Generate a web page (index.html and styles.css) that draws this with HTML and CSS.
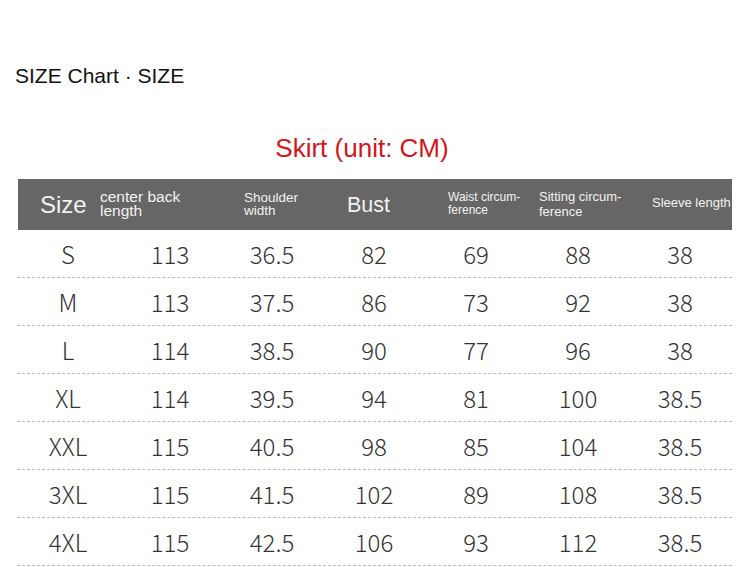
FILE: index.html
```html
<!DOCTYPE html>
<html>
<head>
<meta charset="utf-8">
<link rel="stylesheet" href="styles.css">
</head>
<body>
<div class="page">
  <h1 class="chart-title">SIZE Chart · SIZE</h1>
  <h2 class="sub-title">Skirt (unit: CM)</h2>
  <div class="table">
    <div class="head">
      <div class="hc hc-size">Size</div>
      <div class="hc hc-back">center back<br>length</div>
      <div class="hc hc-shoulder">Shoulder<br>width</div>
      <div class="hc hc-bust">Bust</div>
      <div class="hc hc-waist">Waist circum-<br>ference</div>
      <div class="hc hc-sit">Sitting circum-<br>ference</div>
      <div class="hc hc-sleeve">Sleeve length</div>
    </div>
    <div class="row"><span>S</span><span>113</span><span>36.5</span><span>82</span><span>69</span><span>88</span><span>38</span></div>
    <div class="row"><span>M</span><span>113</span><span>37.5</span><span>86</span><span>73</span><span>92</span><span>38</span></div>
    <div class="row"><span>L</span><span>114</span><span>38.5</span><span>90</span><span>77</span><span>96</span><span>38</span></div>
    <div class="row"><span>XL</span><span>114</span><span>39.5</span><span>94</span><span>81</span><span>100</span><span>38.5</span></div>
    <div class="row"><span>XXL</span><span>115</span><span>40.5</span><span>98</span><span>85</span><span>104</span><span>38.5</span></div>
    <div class="row"><span>3XL</span><span>115</span><span>41.5</span><span>102</span><span>89</span><span>108</span><span>38.5</span></div>
    <div class="row"><span>4XL</span><span>115</span><span>42.5</span><span>106</span><span>93</span><span>112</span><span>38.5</span></div>
  </div>
</div>
</body>
</html>
```
FILE: styles.css
```css
html, body {
  margin: 0;
  padding: 0;
  background: #ffffff;
}
.page {
  width: 750px;
  height: 567px;
  overflow: hidden;
  font-family: "Liberation Sans", Arial, sans-serif;
}
.chart-title {
  margin: 64px 0 0 15px;
  font-size: 21px;
  font-weight: normal;
  color: #111;
  line-height: 24px;
}
.sub-title {
  margin: 45px 0 0 0;
  width: 724px;
  text-align: center;
  font-size: 26px;
  font-weight: normal;
  color: #d1161b;
  line-height: 30px;
}
.table {
  margin: 16px 0 0 18px;
  width: 714px;
}
.head {
  display: flex;
  height: 51px;
  background: #666666;
  color: #f2f2f2;
}
.hc {
  display: flex;
  align-items: center;
  box-sizing: border-box;
}
.hc-size { width: 82px; padding-left: 22px; font-size: 24px; }
.hc-back { width: 144px; font-size: 15.5px; line-height: 14px; padding-bottom: 2px; }
.hc-shoulder { width: 103px; font-size: 13.5px; line-height: 13px; padding-bottom: 2px; }
.hc-bust { width: 101px; font-size: 21.5px; padding-top: 2px; }
.hc-waist { width: 91px; font-size: 12px; line-height: 13px; padding-bottom: 2px; }
.hc-sit { width: 113px; font-size: 13px; line-height: 15px; padding-bottom: 1px; }
.hc-sleeve { width: 80px; font-size: 13px; padding-bottom: 4px; }
.row {
  display: grid;
  grid-template-columns: repeat(7, 102px);
  height: 48px;
  box-sizing: border-box;
  border-bottom: 1px dashed #bdbdbd;
  margin-left: -1px;
  font-family: "Noto Sans CJK SC", "Noto Sans", sans-serif;
  font-weight: 300;
  font-size: 24px;
  color: #333;
}
.row span {
  display: flex;
  align-items: center;
  justify-content: center;
  padding-bottom: 1px;
}
```
